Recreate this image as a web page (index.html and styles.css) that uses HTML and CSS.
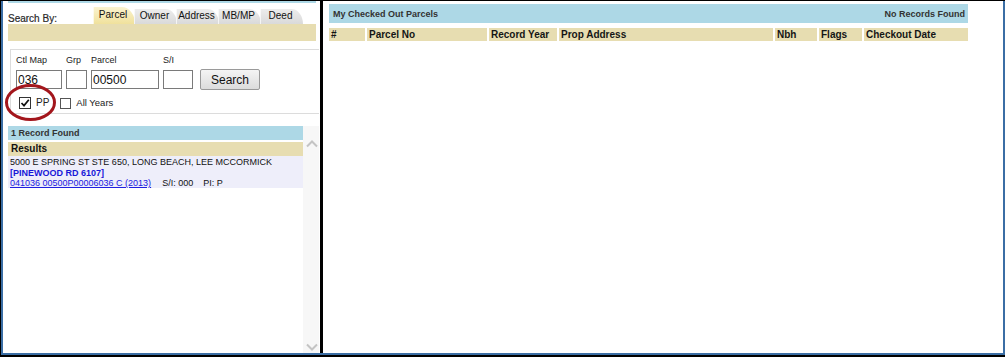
FILE: index.html
```html
<!DOCTYPE html>
<html>
<head>
<meta charset="utf-8">
<link rel="stylesheet" href="styles.css">
</head>
<body>
<div class="window">
  <div class="inner">
    <div class="left">
      <div class="topstrip"></div>
      <div class="searchby">
        <span class="sb-label">Search By:</span>
        <div class="tabs">
          <div class="tab active">Parcel</div>
          <div class="tab">Owner</div>
          <div class="tab">Address</div>
          <div class="tab">MB/MP</div>
          <div class="tab">Deed</div>
        </div>
      </div>
      <div class="tanbar"></div>
      <div class="searchbox">
        <div class="fields">
          <div class="field"><label class="flabel">Ctl Map</label><input class="inp w-ctl" type="text" value="036"></div>
          <div class="field"><label class="flabel">Grp</label><input class="inp w-grp" type="text" value=""></div>
          <div class="field"><label class="flabel">Parcel</label><input class="inp w-par" type="text" value="00500"></div>
          <div class="field"><label class="flabel">S/I</label><input class="inp w-si" type="text" value=""></div>
          <button class="btn" type="button">Search</button>
        </div>
        <div class="checks">
          <span class="cb checked"><svg width="10" height="10" viewBox="0 0 10 10"><path d="M1.5 5 L4 7.6 L8.8 1.8" fill="none" stroke="#111" stroke-width="1.7"/></svg></span>
          <span class="cblabel">PP</span>
          <span class="cb plain"></span>
          <span class="cblabel">All Years</span>
        </div>
      </div>
      <svg class="ring" width="56" height="42" viewBox="0 0 56 42"><ellipse cx="26.5" cy="19.5" rx="24" ry="17" fill="none" stroke="#a3161c" stroke-width="3"/></svg>
      <div class="results">
        <div class="results-main">
          <div class="bar-blue">1 Record Found</div>
          <div class="bar-tan">Results</div>
          <div class="rec">
            <div class="rline">5000 E SPRING ST STE 650, LONG BEACH, LEE MCCORMICK</div>
            <div class="rline addr">[PINEWOOD RD 6107]</div>
            <div class="rline"><a class="plink" href="#">041036 00500P00006036 C (2013)</a><span class="meta">S/I: 000</span><span class="meta2">PI: P</span></div>
          </div>
        </div>
        <div class="scrollbar">
          <svg class="chev" width="12" height="8" viewBox="0 0 12 8"><path d="M1 6.5 L6 1.5 L11 6.5" fill="none" stroke="#c4c4c4" stroke-width="2"/></svg>
          <svg class="chev" width="12" height="8" viewBox="0 0 12 8"><path d="M1 1.5 L6 6.5 L11 1.5" fill="none" stroke="#c4c4c4" stroke-width="2"/></svg>
        </div>
      </div>
    </div>
    <div class="divider"></div>
    <div class="right">
      <div class="titlebar"><span>My Checked Out Parcels</span><span>No Records Found</span></div>
      <div class="cols">
        <div class="col c-num">#</div>
        <div class="col c-pno">Parcel No</div>
        <div class="col c-yr">Record Year</div>
        <div class="col c-addr">Prop Address</div>
        <div class="col c-nbh">Nbh</div>
        <div class="col c-flg">Flags</div>
        <div class="col c-date">Checkout Date</div>
      </div>
    </div>
  </div>
</div>
</body>
</html>
```
FILE: styles.css
```css
html, body {
  margin: 0;
  padding: 0;
  background: #ffffff;
  width: 1008px;
  height: 357px;
  overflow: hidden;
  font-family: "Liberation Sans", Arial, sans-serif;
}

.window {
  width: 1005px;
  height: 357px;
  box-sizing: border-box;
  border-top: 1px solid #000;
  border-left: 1px solid #000;
  border-bottom: 2px solid #000;
}

.inner {
  height: 100%;
  box-sizing: border-box;
  border-left: 2px solid #3b6ea5;
  border-right: 2px solid #3b6ea5;
  border-bottom: 2px solid #3b6ea5;
  display: flex;
}

/* left panel */
.left {
  width: 317px;
  flex: none;
  position: relative;
  padding-left: 5px;
  box-sizing: border-box;
  display: flex;
  flex-direction: column;
}

.topstrip {
  width: 308px;
  height: 2px;
  background: #add8e6;
}

.searchby {
  height: 21px;
  display: flex;
  align-items: flex-end;
}

.sb-label {
  width: 85px;
  flex: none;
  font-size: 10px;
  line-height: 10px;
  color: #2a2a2a;
  margin-bottom: 0;
  -webkit-text-stroke: 0.2px #2a2a2a;
}

.tabs {
  display: flex;
  align-items: flex-end;
  height: 17px;
}

.tab {
  width: 43px;
  height: 15px;
  box-sizing: border-box;
  padding: 0 9px 0 7px;
  margin-left: -1px;
  font-size: 10px;
  line-height: 13px;
  color: #111;
  text-align: center;
  white-space: nowrap;
  display: flex;
  justify-content: center;
  border-top-right-radius: 13px 17px;
  background: linear-gradient(#ececec, #dadada);
  box-shadow: inset 1px 0 0 rgba(255,255,255,0.7);
}

.tab:first-child {
  margin-left: 0;
  width: 42px;
}

.tab.active {
  height: 17px;
  line-height: 16px;
  background: linear-gradient(#faf3cf, #f0e19c);
}

.tanbar {
  width: 308px;
  height: 17px;
  background: #e7ddb1;
}

.searchbox {
  margin-top: 8px;
  margin-left: 2px;
  width: 309px;
  height: 65px;
  box-sizing: border-box;
  border-top: 1px solid #dcdcdc;
  border-left: 1px solid #dcdcdc;
  border-bottom: 1px solid #dcdcdc;
  padding: 5px 0 0 5px;
}

.fields {
  display: flex;
  align-items: flex-end;
}

.field {
  display: flex;
  flex-direction: column;
  margin-right: 4px;
}

.field:nth-child(4) {
  margin-right: 7px;
}

.flabel {
  font-size: 9px;
  line-height: 10px;
  height: 10px;
  color: #222;
  margin-bottom: 5px;
}

.inp {
  height: 19px;
  box-sizing: border-box;
  border: 1px solid #7a7a7a;
  padding: 0 0 0 1px;
  margin: 0;
  font-family: "Liberation Sans", Arial, sans-serif;
  font-size: 12px;
  color: #111;
  background: #fff;
  outline: none;
}

.w-ctl { width: 46px; }
.w-grp { width: 21px; }
.w-par { width: 68px; }
.w-si { width: 30px; }

.btn {
  width: 60px;
  height: 21px;
  margin: 0 0 -1px 0;
  padding: 0;
  box-sizing: border-box;
  border: 1px solid #9a9a9a;
  border-radius: 2px;
  background: linear-gradient(#f4f4f4, #dcdcdc);
  font-family: "Liberation Sans", Arial, sans-serif;
  font-size: 12px;
  color: #111;
}

.checks {
  display: flex;
  align-items: center;
  margin-top: 8px;
  padding-left: 3px;
  height: 12px;
}

.cb {
  width: 12px;
  height: 12px;
  box-sizing: border-box;
  border: 1px solid #333;
  background: #fff;
  display: flex;
  align-items: center;
  justify-content: center;
}

.cb.plain {
  border-color: #555;
  margin-left: 11px;
  width: 11px;
  height: 11px;
}

.cblabel {
  font-size: 10px;
  line-height: 12px;
  color: #222;
  margin-left: 5px;
}

.cb.plain + .cblabel {
  font-size: 9.5px;
  margin-left: 5px;
}

.ring {
  position: absolute;
  left: 1px;
  top: 82px;
}

.results {
  margin-top: 12px;
  flex: 1;
  display: flex;
  width: 311px;
}

.results-main {
  width: 295px;
  flex: none;
}

.bar-blue {
  height: 14px;
  background: #add8e6;
  font-size: 9px;
  font-weight: bold;
  line-height: 14px;
  padding-left: 3px;
  color: #333;
}

.bar-tan {
  margin-top: 2px;
  height: 14px;
  background: #e7ddb1;
  font-size: 10px;
  font-weight: bold;
  line-height: 14px;
  padding-left: 3px;
  color: #111;
}

.rec {
  background: #eeeefa;
  padding: 1px 0 1px 2px;
  height: 32px;
  box-sizing: border-box;
}

.rline {
  font-size: 9px;
  line-height: 10.5px;
  color: #111;
  white-space: nowrap;
}

.rline.addr {
  color: #1818d8;
  font-weight: bold;
}

.plink {
  color: #2020e0;
  text-decoration: underline;
}

.meta {
  margin-left: 11px;
}

.meta2 {
  margin-left: 10px;
}

.scrollbar {
  width: 16px;
  margin-left: 0;
  background: #f7f7f7;
  display: flex;
  flex-direction: column;
  justify-content: space-between;
  align-items: center;
  padding: 14px 0 2px 1px;
  box-sizing: border-box;
}

.divider {
  width: 3px;
  flex: none;
  background: #000;
}

/* right panel */
.right {
  flex: 1;
  padding: 3px 0 0 6px;
}

.titlebar {
  width: 639px;
  height: 19px;
  box-sizing: border-box;
  background: #add8e6;
  display: flex;
  justify-content: space-between;
  align-items: center;
  padding: 0 3px 0 4px;
  font-size: 9px;
  font-weight: bold;
  color: #333;
}

.cols {
  margin-top: 5px;
  display: flex;
  gap: 2px;
  height: 13px;
  width: 639px;
}

.col {
  background: #e7ddb1;
  font-size: 10px;
  font-weight: bold;
  line-height: 13px;
  padding-left: 2px;
  box-sizing: border-box;
  color: #151515;
  white-space: nowrap;
}

.c-num { width: 36px; }
.c-pno { width: 120px; }
.c-yr { width: 68px; }
.c-addr { width: 214px; }
.c-nbh { width: 42px; }
.c-flg { width: 43px; }
.c-date { width: 104px; }
```
